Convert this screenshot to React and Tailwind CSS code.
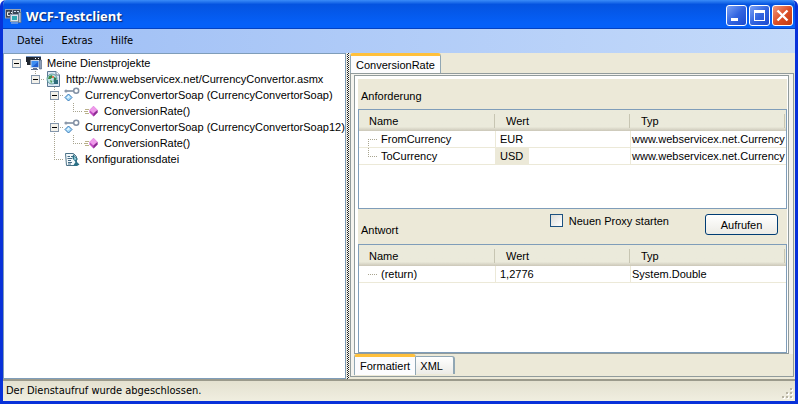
import React from "react";

const GUIDE = "#a8a48f";

/* One 19x16 cell of the tree's connecting lines */
function Guide({ up, down, right, box }) {
  return (
    <svg width="19" height="16" viewBox="0 0 19 16" className="shrink-0" shapeRendering="crispEdges" aria-hidden="true">
      <g stroke={GUIDE} strokeDasharray="1 1" fill="none">
        {up && <path d="M9.5 0V8" />}
        {down && <path d="M9.5 8V16" />}
        {right && <path d="M9 8.5H19" />}
      </g>
      {box && (
        <g>
          <rect x="5.5" y="4.5" width="8" height="8" rx="1" fill="#f3f1ea" stroke="#8496ab" />
          <path d="M7 8.5H12" stroke="#000" />
        </g>
      )}
    </svg>
  );
}

function AppIcon() {
  return (
    <svg width="17" height="16" viewBox="0 0 17 16" className="shrink-0" aria-hidden="true">
      <rect x="0.5" y="1.5" width="8" height="8.5" fill="#3a4350" stroke="#9aa5b3" />
      <path d="M4.8 4.2H2.6V7.6H4.8M6.5 4V5M6.5 7V8" stroke="#fff" fill="none" />
      <rect x="7.5" y="1.5" width="8" height="5" fill="#3a4656" stroke="#9aa5b3" />
      <path d="M9 3.5H11M12 3.5H14" stroke="#cfe0f5" />
      <rect x="5.5" y="6.5" width="8" height="7" fill="#dbe3ec" stroke="#8fa0b4" />
      <rect x="7" y="8" width="5" height="4" fill="#2fa8b0" />
      <rect x="13.5" y="4.5" width="2.5" height="10" fill="#b3bfcc" stroke="#5f7389" strokeWidth="0.8" />
      <path d="M6 15H13" stroke="#b9c5d2" />
    </svg>
  );
}

function ProjectsIcon() {
  return (
    <svg width="16" height="16" viewBox="0 0 16 16" className="shrink-0" aria-hidden="true">
      <path d="M0 1H8V10H1V7H0Z" fill="#20262f" />
      <path d="M0 1.5H8" stroke="#7d9cc8" />
      <rect x="7" y="1" width="8" height="5" fill="#262d38" />
      <path d="M7 1.5H15" stroke="#7d9cc8" />
      <path d="M9 3.5H10M12 3.5H13" stroke="#fff" />
      <rect x="5" y="5.5" width="8" height="7" fill="#3d8df0" stroke="#c5d3e6" />
      <path d="M6 12L12 7V12Z" fill="#1f5fd0" />
      <path d="M13.5 5H15.5V14H13.5Z" fill="#8c9fba" stroke="#4a5c78" strokeWidth="0.6" />
      <path d="M7 13.5H11M5 14.5H12" stroke="#5e718c" />
    </svg>
  );
}

function ServiceIcon() {
  return (
    <svg width="16" height="16" viewBox="0 0 16 16" className="shrink-0" aria-hidden="true">
      <path d="M2.5 0.5H11L14.5 4V15.5H2.5Z" fill="#dce8f4" stroke="#5c7894" />
      <path d="M11 0.5V4H14.5" fill="#fff" stroke="#5c7894" />
      <circle cx="7" cy="8" r="5" fill="#bfe3ea" stroke="#4b8b86" strokeWidth="0.8" />
      <path d="M4 5L7 4L8 6L5.5 8L3 8Z" fill="#3d8e45" />
      <path d="M9 6L11.5 7L10.5 11L8.5 11Z" fill="#2f7f50" />
      <path d="M5 9L7.5 10L6 12.5Z" fill="#4d9f55" />
      <rect x="7" y="5" width="2" height="2" fill="#e07a55" />
      <rect x="9" y="9" width="4" height="4" fill="#2e6b7c" />
    </svg>
  );
}

function ContractIcon() {
  return (
    <svg width="16" height="16" viewBox="0 0 16 16" className="shrink-0" aria-hidden="true">
      <path d="M2 4H10" stroke="#76869a" strokeWidth="1.4" />
      <circle cx="2" cy="4" r="1.6" fill="#8b99aa" />
      <circle cx="12.2" cy="3.8" r="2.5" fill="#fff" stroke="#8290a4" strokeWidth="1.5" />
      <path d="M4.5 7L8 10.5L4.5 14L1 10.5Z" fill="#a9dcfa" stroke="#3678b8" />
      <path d="M4.5 8.5L6 10L3.5 11.5L2.8 10.4Z" fill="#e8f8ff" />
    </svg>
  );
}

function OperationIcon() {
  return (
    <svg width="16" height="16" viewBox="0 0 16 16" className="shrink-0" aria-hidden="true">
      <path d="M2 6.5H6M1 8.5H5M2 10.5H6" stroke="#b9b18a" />
      <path d="M10.5 3L14.5 7V9.5L10.5 13.5L6.5 9.5V7Z" fill="#c34cc4" />
      <path d="M10.5 3L14.5 7L10.5 10.5L6.5 7Z" fill="#ee9bea" />
      <path d="M10.5 10.5V13.5L14.5 9.5V7Z" fill="#8c2b91" />
    </svg>
  );
}

function ConfigIcon() {
  return (
    <svg width="16" height="16" viewBox="0 0 16 16" className="shrink-0" aria-hidden="true">
      <path d="M1.5 2.5H9.5L12.5 5.5V14.5H2.5Z" fill="#f4fafc" stroke="#4d7288" />
      <path d="M3.5 5.5H6M7 5.5H9M3.5 7.5H8M4 9.5H7M4 11.5H8M4 13H7" stroke="#456b85" />
      <path d="M9 3L14 8L12 10L15.5 13.5L13 15H9L11.5 11L8.5 7.5Z" fill="#2c7086" />
      <path d="M10 5L12.5 8L10.5 9.5" fill="#9fd8e4" />
    </svg>
  );
}

const V = { up: true, down: true };
const TREE = [
  { label: "Meine Dienstprojekte", icon: ProjectsIcon, cells: [{ box: true }] },
  { label: "http://www.webservicex.net/CurrencyConvertor.asmx", icon: ServiceIcon, cells: [{}, { up: true, right: true, box: true }] },
  { label: "CurrencyConvertorSoap (CurrencyConvertorSoap)", icon: ContractIcon, cells: [{}, {}, { ...V, right: true, box: true }] },
  { label: "ConversionRate()", icon: OperationIcon, cells: [{}, {}, V, { up: true, right: true }] },
  { label: "CurrencyConvertorSoap (CurrencyConvertorSoap12)", icon: ContractIcon, cells: [{}, {}, { ...V, right: true, box: true }] },
  { label: "ConversionRate()", icon: OperationIcon, cells: [{}, {}, V, { up: true, right: true }] },
  { label: "Konfigurationsdatei", icon: ConfigIcon, cells: [{}, {}, { up: true, right: true }] },
];

function CaptionButton({ label, close, children }) {
  return (
    <button
      type="button"
      aria-label={label}
      className={
        "h-[21px] w-[21px] rounded-[3px] border border-white " +
        (close
          ? "bg-linear-to-br from-[#f0987c] via-[#dd4f26] to-[#c03a12]"
          : "bg-linear-to-br from-[#7ba0f5] via-[#3365e0] to-[#1c49cf]")
      }
    >
      <svg width="19" height="19" viewBox="0 0 19 19" fill="none" stroke="#fff" shapeRendering={close ? "auto" : "crispEdges"} aria-hidden="true">
        {children}
      </svg>
    </button>
  );
}

function TitleBar() {
  return (
    <header className="flex h-[29px] shrink-0 items-center bg-linear-to-b from-[#3a8cf8] via-[#0453e0] via-15% to-[#0560f8] to-80% px-0.5 pt-0.5 shadow-[inset_0_-1px_0_#0342c4]">
      <AppIcon />
      <h1 className="ml-1 flex-1 font-['Open_Sans',sans-serif] text-[13px] leading-5 font-bold text-white [text-shadow:1px_1px_1px_#0a246a]">
        WCF-Testclient
      </h1>
      <div className="flex gap-0.5">
        <CaptionButton label="Minimieren">
          <path d="M4 13.5H11" strokeWidth="3" />
        </CaptionButton>
        <CaptionButton label="Maximieren">
          <path d="M4.5 5V14.5H14.5V5" />
          <path d="M4 5.5H15" strokeWidth="3" />
        </CaptionButton>
        <CaptionButton label="Schließen" close>
          <path d="M4.5 4.5L14.5 14.5M14.5 4.5L4.5 14.5" strokeWidth="2.4" />
        </CaptionButton>
      </div>
    </header>
  );
}

function Grid({ rows, label }) {
  return (
    <table aria-label={label} className="w-full table-fixed border-separate border-spacing-0 text-left">
      <colgroup>
        <col className="w-[137px]" />
        <col className="w-[135px]" />
        <col />
      </colgroup>
      <thead>
        <tr className="h-[21px] bg-linear-to-b from-[#ebeadb] from-80% to-[#cbc7b8]">
          {["Name", "Wert", "Typ"].map((h) => (
            <th key={h} scope="col" className="p-0 font-normal">
              <div className="mr-px flex h-[14px] items-center border-r border-[#c7c5b2] pl-[10px]">{h}</div>
            </th>
          ))}
        </tr>
      </thead>
      <tbody>
        {rows.map((r, i) => (
          <tr key={r.name} className="h-[17px]">
            <th scope="row" className="border-r border-b border-[#ece9d8] p-0 font-normal">
              <div className="flex h-4 items-center">
                <Guide right up={i > 0} down={i < rows.length - 1} />
                <span className="ml-[3px]">{r.name}</span>
              </div>
            </th>
            <td className="border-r border-b border-[#ece9d8] p-0">
              <div className={"flex h-4 w-fit items-center pr-1.5 pl-1 " + (r.selected ? "bg-[#ece9d8]" : "")}>{r.value}</div>
            </td>
            <td className="border-b border-[#ece9d8] p-0 pl-px whitespace-nowrap">{r.type}</td>
          </tr>
        ))}
      </tbody>
    </table>
  );
}

export default function App() {
  return (
    <div className="flex min-h-screen w-full flex-col overflow-hidden rounded-t-[6px] border-x-[3px] border-b-[3px] border-[#0831d9] bg-[#ece9d8] font-['Liberation_Sans',Arial,sans-serif] text-[11px] leading-4 text-black">
      <TitleBar />
      <nav className="flex h-6 shrink-0 items-center gap-[18px] bg-linear-to-r from-[#9ebef5] to-[#c4dafa] pl-[14px] font-['DejaVu_Sans_Condensed',Tahoma,sans-serif]">
        <button type="button">Datei</button>
        <button type="button">Extras</button>
        <button type="button">Hilfe</button>
      </nav>

      <main className="flex flex-1">
        <section aria-label="Dienste" className="w-[343px] shrink-0 border border-[#7f9db9] bg-white pt-px pl-[3px]">
          <ul>
            {TREE.map(({ label, icon: Icon, cells }, i) => (
              <li key={i} className="flex h-4 items-center whitespace-nowrap">
                {cells.map((c, j) => (
                  <Guide key={j} {...c} />
                ))}
                <Icon />
                <span className="ml-[5px]">{label}</span>
              </li>
            ))}
          </ul>
        </section>

        <div className="mx-px w-[2px] shrink-0 bg-[repeating-conic-gradient(#222_0_25%,#fff_0_50%)] bg-size-[2px_2px]" />

        <section className="flex min-w-0 flex-1 flex-col pr-px pb-[2px]">
          <div role="tablist" className="flex h-5 items-end">
            <button
              type="button"
              role="tab"
              aria-selected="true"
              className="-mb-px h-[21px] rounded-t-[3px] border-x border-t-[3px] border-x-[#91a7b4] border-t-[#ffc03c] bg-[#fcfcfe] px-[5px]"
            >
              ConversionRate
            </button>
          </div>
          <div className="flex flex-1 flex-col border border-[#919b9c] bg-[#f4f3ee] pt-px pr-1 pl-[3px]">
            <div className="flex flex-1 flex-col border border-[#919b9c] bg-white pt-[3px] pr-px pl-[3px]">
              <div className="flex flex-1 flex-col bg-[#ece9d8]">
                <h2 className="flex h-[30px] items-center pt-1 pl-[3px]">Anforderung</h2>
                <div className="h-[100px] border border-[#7f9db9] bg-white">
                  <Grid
                    label="Anforderung"
                    rows={[
                      { name: "FromCurrency", value: "EUR", type: "www.webservicex.net.Currency" },
                      { name: "ToCurrency", value: "USD", type: "www.webservicex.net.Currency", selected: true },
                    ]}
                  />
                </div>
                <div className="flex h-[35px] items-start pr-[9px] pl-[3px]">
                  <h2 className="mt-[13px] flex-1">Antwort</h2>
                  <input
                    id="new-proxy"
                    type="checkbox"
                    className="mt-[5px] h-[13px] w-[13px] appearance-none border border-[#1c5180] bg-linear-to-br from-[#dcdcd7] to-white"
                  />
                  <label htmlFor="new-proxy" className="mt-1 ml-1.5">
                    Neuen Proxy starten
                  </label>
                  <button
                    type="button"
                    className="mt-[5px] ml-9 h-[21px] w-[73px] rounded-[3px] border border-[#003c74] bg-linear-to-b from-white to-[#ecebe5]"
                  >
                    Aufrufen
                  </button>
                </div>
                <div className="flex-1 border border-[#7f9db9] bg-white">
                  <Grid label="Antwort" rows={[{ name: "(return)", value: "1,2776", type: "System.Double" }]} />
                </div>
              </div>
            </div>
            <div role="tablist" className="-mr-1 flex h-[22px] items-start bg-[#ece9d8]">
              <button
                type="button"
                role="tab"
                aria-selected="true"
                className="h-[21px] rounded-t-[3px] border-x border-t-[3px] border-x-[#91a7b4] border-t-[#ffc03c] bg-[#fcfcfe] px-[5px]"
              >
                Formatiert
              </button>
              <button
                type="button"
                role="tab"
                aria-selected="false"
                className="mt-0.5 h-[18px] w-[39px] rounded-tr-[3px] border-t border-r-2 border-[#91a7b4] bg-linear-to-b from-white to-[#ecebe6] pr-1.5"
              >
                XML
              </button>
            </div>
          </div>
        </section>
      </main>

      <footer className="flex h-[22px] shrink-0 items-center justify-between border-t-2 border-[#9b9a8c] bg-linear-to-b from-[#e4e1d0] to-[#f0eee0] pl-[3px] font-['DejaVu_Sans_Condensed',Tahoma,sans-serif]">
        <p>Der Dienstaufruf wurde abgeschlossen.</p>
        <svg width="14" height="14" viewBox="0 0 14 14" className="self-end" shapeRendering="crispEdges" aria-hidden="true">
          {[[9, 1], [5, 5], [9, 5], [1, 9], [5, 9], [9, 9]].map(([x, y]) => (
            <g key={x + "-" + y}>
              <rect x={x + 1} y={y + 1} width="2" height="2" fill="#fff" />
              <rect x={x} y={y} width="2" height="2" fill="#b8b4a3" />
            </g>
          ))}
        </svg>
      </footer>
    </div>
  );
}
